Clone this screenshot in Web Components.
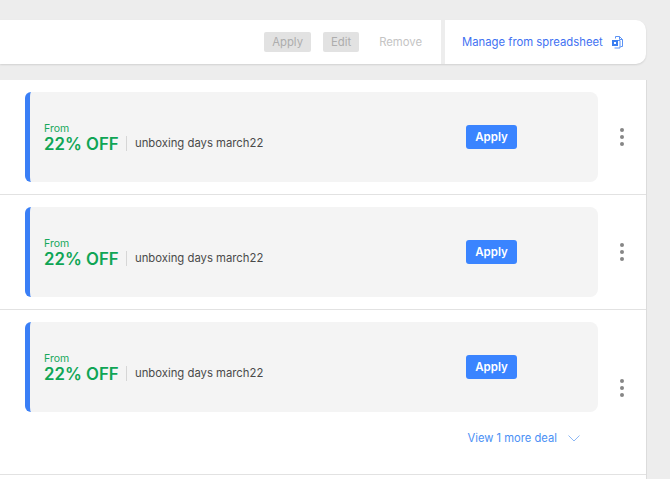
<!DOCTYPE html>
<html>
<head>
<meta charset="utf-8">
<style>
  html, body { margin: 0; height: 100%; overflow: hidden; background: #ededed; font-family: Inter, "Liberation Sans", sans-serif; }
</style>
</head>
<body>
<deals-page>
  <action-bar></action-bar>
  <deals-panel>
    <deal-row></deal-row>
    <deal-row></deal-row>
    <deal-row last more="View 1 more deal"></deal-row>
  </deals-panel>
</deals-page>
<script>
class DealsPage extends HTMLElement {
  connectedCallback() {
    this.attachShadow({ mode: 'open' });
    this.shadowRoot.innerHTML = `
      <style>
        :host { display: flex; flex-direction: column; gap: 16px; width: 646px; height: 100vh; box-sizing: border-box; padding-top: 20px; }
        ::slotted(deals-panel) { flex: 1; }
      </style>
      <slot></slot>
    `;
  }
}

class ActionBar extends HTMLElement {
  connectedCallback() {
    this.attachShadow({ mode: 'open' });
    this.shadowRoot.innerHTML = `
      <style>
        :host { display: flex; flex: none; height: 44px; background: #fff; border-radius: 0 10px 10px 0; box-shadow: 0 1px 2px rgba(0,0,0,.12); font-size: 11.3px; }
        .left { flex: 1; display: flex; align-items: center; justify-content: flex-end; gap: 12px; padding-right: 19px; border-right: 4px solid #ededed; }
        .btn { background: #e2e2e2; color: #adadad; border-radius: 2px; height: 20px; line-height: 20px; padding: 0 8px; box-sizing: border-box; }
        .remove { color: #c4c4c4; margin-left: 8px; }
        .right { display: flex; align-items: center; gap: 8px; width: 201px; box-sizing: border-box; padding-left: 17px; color: #3f72f2; }
        svg { display: block; }
      </style>
      <div class="left">
        <span class="btn">Apply</span>
        <span class="btn">Edit</span>
        <span class="remove">Remove</span>
      </div>
      <div class="right">
        <span>Manage from spreadsheet</span>
        <svg width="13" height="14" viewBox="0 0 13 14" fill="none">
          <path d="M4.5 3.5V1.5h4l3 3v7h-2" stroke="#5b93f5"/>
          <path d="M8.5 1.5v3h3" stroke="#5b93f5"/>
          <path d="M3.5 5.5h5.5v7.5h-5.5" stroke="#5b93f5"/>
          <rect x="1" y="5" width="6" height="6" fill="#3b7ff0"/>
          <path d="M3 7l2 2M5 7l-2 2" stroke="#fff"/>
        </svg>
      </div>
    `;
  }
}

class DealsPanel extends HTMLElement {
  connectedCallback() {
    this.attachShadow({ mode: 'open' });
    this.shadowRoot.innerHTML = `
      <style>
        :host { display: block; background: #fff; border-right: 1px solid #dcdcdc; margin-right: -1px; }
      </style>
      <slot></slot>
    `;
  }
}

class DealRow extends HTMLElement {
  connectedCallback() {
    const more = this.getAttribute('more');
    const last = this.hasAttribute('last');
    this.attachShadow({ mode: 'open' });
    this.shadowRoot.innerHTML = `
      <style>
        :host { display: block; border-bottom: 1px solid #e2e2e2; padding: 12px 0 12px 25px; }
        .line { display: flex; align-items: ${last ? 'flex-end' : 'center'}; }
        .card { width: 573px; height: 90px; box-sizing: border-box; flex: none; display: flex; align-items: center; background: #f4f4f4; border-left: 5px solid #3a7ff6; border-radius: 6px 8px 8px 6px; padding-left: 14px; }
        .offer { display: flex; flex-direction: column; width: 422px; flex: none; padding-top: 3px; }
        .from { font-size: 10.5px; line-height: 10px; color: #17a85b; }
        .deal { display: flex; align-items: center; }
        .pct { font-size: 16.8px; line-height: 20px; font-weight: 600; color: #0fa555; width: 74px; white-space: nowrap; }
        .name { font-size: 11.3px; color: #4a4a4a; margin-left: 8px; padding-left: 8px; border-left: 1px solid #d6d6d6; line-height: 15px; }
        .apply { width: 51px; height: 24px; line-height: 24px; text-align: center; background: #3a84ff; color: #fff; font-size: 11.5px; font-weight: 600; border-radius: 3px; }
        .dots { flex: 1; display: flex; flex-direction: column; align-items: center; gap: 3px; padding-right: 1px; margin-bottom: ${last ? '15px' : '0'}; }
        .dots i { width: 4px; height: 4px; border-radius: 50%; background: #868686; }
        .more { display: flex; justify-content: flex-end; align-items: center; gap: 11px; width: 555px; height: 50px; box-sizing: border-box; padding-top: 2px; font-size: 11.2px; color: #4a90f5; }
      </style>
      <div class="line">
        <div class="card">
          <div class="offer">
            <span class="from">From</span>
            <div class="deal"><span class="pct">22% OFF</span><span class="name">unboxing days march22</span></div>
          </div>
          <span class="apply">Apply</span>
        </div>
        <div class="dots"><i></i><i></i><i></i></div>
      </div>
      ${more ? `<div class="more"><span>${more}</span>
        <svg width="12" height="7" viewBox="0 0 12 7" fill="none"><path d="M.5.5L6 6l5.5-5.5" stroke="#8db8f5"/></svg></div>` : ''}
    `;
  }
}

customElements.define('deals-page', DealsPage);
customElements.define('action-bar', ActionBar);
customElements.define('deals-panel', DealsPanel);
customElements.define('deal-row', DealRow);
</script>
</body>
</html>
